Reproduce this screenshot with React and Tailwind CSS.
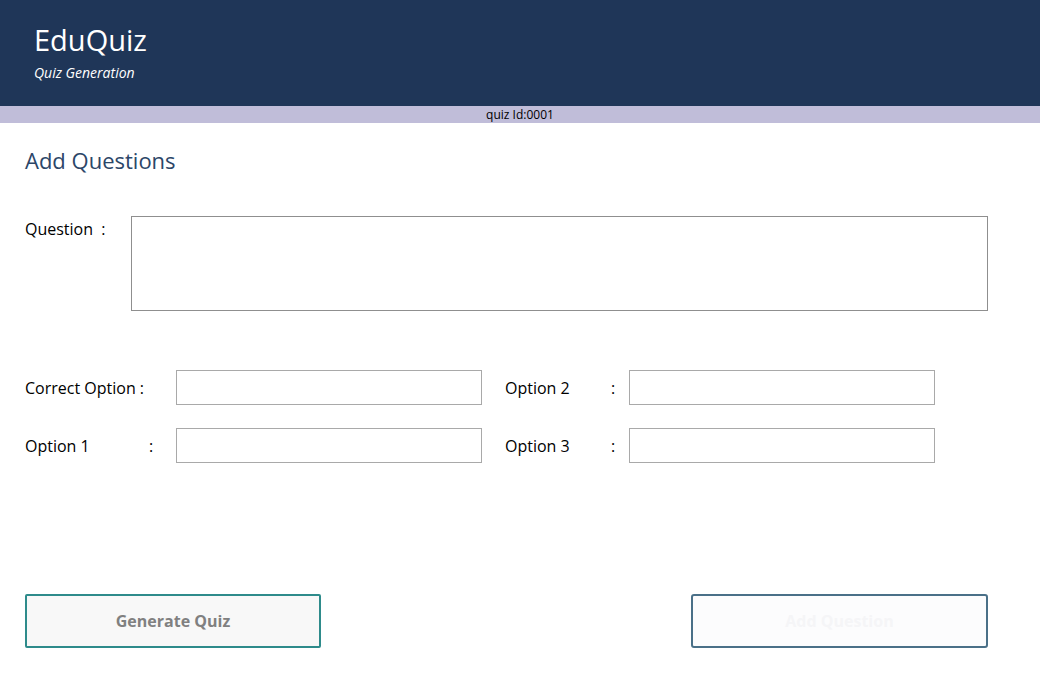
export default function App() {
  const lab = "text-[16px] text-black";
  const inp = "h-[35px] w-[306px] border border-[#a9a9a9] bg-white";
  return (
    <div className="w-[1040px] h-[697px] bg-white" style={{fontFamily:"'Open Sans','Liberation Sans',sans-serif"}}>
      <header className="h-[106px] bg-[#1f3658] pl-[34px] pt-[22px] text-white">
        <div className="text-[29px] leading-[36px]">EduQuiz</div>
        <div className="mt-[6px] text-[14px] italic leading-[18px]">Quiz Generation</div>
      </header>
      <div className="h-[17px] bg-[#c0bdd9] text-center text-[12px] leading-[17px] text-black">quiz Id:0001</div>
      <div className="px-[25px]">
        <h1 className="mt-[23px] text-[22px] leading-[28px] text-[#2c4668]">Add Questions</h1>
        <div className="mt-[42px] flex">
          <div className={lab + " w-[106px] pt-[1px]"}>Question&nbsp; :</div>
          <div className="h-[95px] w-[857px] border border-[#8f8f8f]"></div>
        </div>
        <div className="mt-[59px] flex items-center">
          <div className={lab + " w-[151px]"}>Correct Option :</div>
          <div className={inp}></div>
          <div className={lab + " ml-[23px] w-[106px]"}>Option 2</div>
          <div className={lab + " w-[18px]"}>:</div>
          <div className={inp}></div>
        </div>
        <div className="mt-[23px] flex items-center">
          <div className={lab + " w-[124px]"}>Option 1</div>
          <div className={lab + " w-[27px]"}>:</div>
          <div className={inp}></div>
          <div className={lab + " ml-[23px] w-[106px]"}>Option 3</div>
          <div className={lab + " w-[18px]"}>:</div>
          <div className={inp}></div>
        </div>
        <div className="mt-[131px] flex justify-between pr-[27px]">
          <button className="h-[54px] w-[296px] rounded-[2px] border-2 border-[#2e8b8b] bg-[#f8f8f8] text-[16px] font-bold text-[#808080]">Generate Quiz</button>
          <button className="h-[54px] w-[297px] rounded-[3px] border-2 border-[#4a7088] bg-[#fcfcfd] text-[16px] font-bold text-[#f5f5f7]">Add Question</button>
        </div>
      </div>
    </div>
  );
}
